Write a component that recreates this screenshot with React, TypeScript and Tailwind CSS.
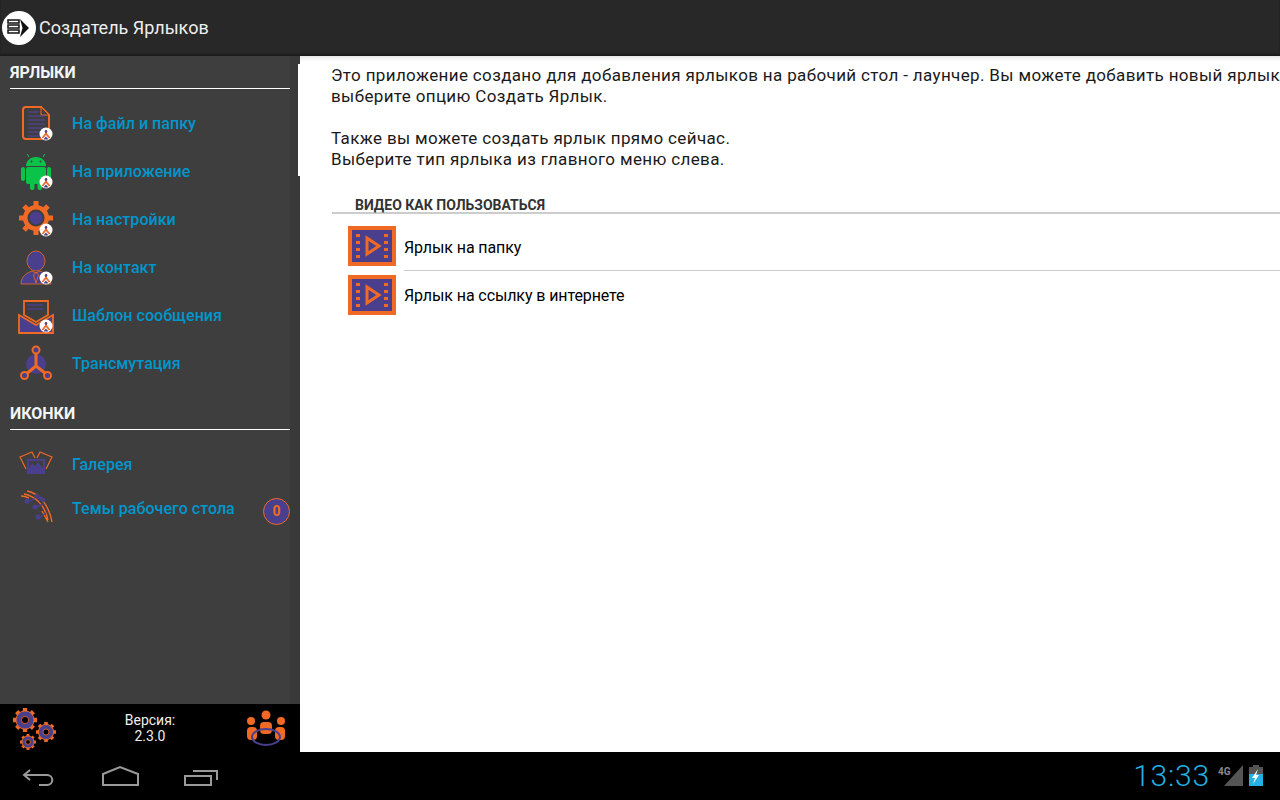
import type { ReactNode } from "react";

const orange = "#f06a26";
const purple = "#4a3f8c";

const Badge = () => (
  <g>
    <circle cx="30" cy="31" r="6.500" fill="#fff" />
    <path d="M30 27v3.500M30 30.500l-3.500 4.500M30 30.500l3.500 4.500" stroke={orange} strokeWidth="1.800" fill="none" />
    <circle cx="30" cy="28.500" r="1.300" fill={purple} />
    <path d="M27.500 36.500l2.500-3 2.500 3z" fill={purple} />
  </g>
);

const FileIcon = () => (
  <svg width="40" height="40" viewBox="0 0 40 40">
    <path d="M10 4h15l8 8v21a3 3 0 0 1-3 3H10a3 3 0 0 1-3-3V7a3 3 0 0 1 3-3z" fill="#3d3e3d" stroke={orange} strokeWidth="2" />
    <path d="M25 4v8h8z" fill="#3d3e3d" stroke={orange} strokeWidth="1" />
    <path d="M12 9h11M12 13h17M12 17h17M12 21h17M12 25h15M12 29h13M12 33h13" stroke="#5547a8" strokeWidth="1.100" />
    <Badge />
  </svg>
);

const AndroidIcon = () => (
  <svg width="40" height="40" viewBox="0 0 40 40">
    <path d="M11 3l2 3M29 3l-2 3" stroke="#0ac44a" strokeWidth="1" />
    <path d="M10 15c0-5 4-9 10-9s10 4 10 9z" fill="#0ac44a" />
    <circle cx="15.500" cy="10.500" r="1" fill="#3d3e3d" />
    <circle cx="24.500" cy="10.500" r="1" fill="#3d3e3d" />
    <rect x="10" y="16" width="20" height="17" rx="2" fill="#0ac44a" />
    <rect x="5" y="16" width="4" height="14" rx="2" fill="#0ac44a" />
    <rect x="31" y="16" width="4" height="14" rx="2" fill="#0ac44a" />
    <rect x="14" y="31" width="4.500" height="8" rx="2" fill="#0ac44a" />
    <rect x="21.500" y="31" width="4.500" height="8" rx="2" fill="#0ac44a" />
    <Badge />
  </svg>
);

const GearIcon = () => (
  <svg width="40" height="40" viewBox="0 0 40 40">
    <g stroke={orange} strokeWidth="5">
      <path d="M20 2v34M3 19h34M8 7l24 24M32 7L8 31" />
    </g>
    <circle cx="20" cy="19" r="13" fill={orange} />
    <circle cx="20" cy="19" r="8.500" fill="#3d3e3d" />
    <circle cx="20" cy="19" r="6.500" fill={purple} />
    <Badge />
  </svg>
);

const ContactIcon = () => (
  <svg width="40" height="40" viewBox="0 0 40 40">
    <ellipse cx="20" cy="14" rx="9" ry="10" fill={purple} stroke={orange} strokeWidth="0.800" />
    <path d="M5 37c0-8 6-11 11-13l4 2 4-2c5 2 11 5 11 13z" fill={purple} stroke={orange} strokeWidth="0.800" />
    <path d="M20 25l-2.500 3 2.500 8 2.500-8z" fill="none" stroke={orange} strokeWidth="0.800" />
    <Badge />
  </svg>
);

const MailIcon = () => (
  <svg width="40" height="40" viewBox="0 0 40 40">
    <path d="M3 20v18h34V20L20 30z" fill={purple} stroke={orange} strokeWidth="1.800" />
    <path d="M8 20V6h24v14L20 27z" fill="#3d3e3d" stroke={orange} strokeWidth="1.800" />
    <path d="M11 10h16M11 14h16" stroke={purple} strokeWidth="1.600" />
    <Badge />
  </svg>
);

const TransmuteIcon = () => (
  <svg width="40" height="40" viewBox="0 0 40 40">
    <circle cx="20" cy="21" r="10" fill={purple} />
    <path d="M20 7v16L9 32M20 23l11.500 9" stroke={orange} strokeWidth="3" fill="none" />
    <circle cx="20" cy="7" r="3.500" fill={purple} stroke={orange} strokeWidth="2" />
    <circle cx="8.500" cy="32.500" r="3.500" fill={purple} stroke={orange} strokeWidth="2" />
    <circle cx="31.500" cy="32.500" r="3.500" fill={purple} stroke={orange} strokeWidth="2" />
  </svg>
);

const GalleryIcon = () => (
  <svg width="40" height="40" viewBox="0 0 40 40">
    <path d="M10 26L4 14l12-5 3 6M30 26l6-12-12-5-3 6" fill="none" stroke={orange} strokeWidth="1.200" />
    <rect x="11" y="16" width="18" height="15" fill={purple} />
    <path d="M13 25l3-5 3 3 3-4 5 6v-7H13z" fill="#3d3e3d" />
  </svg>
);

const ThemesIcon = () => (
  <svg width="40" height="40" viewBox="0 0 40 40">
    <path d="M11 4c12 2 22 14 25 31M8 7c11 2 21 11 24 26M5 9c3 0 6 1 8 2M26 24l6 11" stroke={orange} strokeWidth="1.400" fill="none" />
    <path d="M19 8l10 6" stroke={purple} strokeWidth="3.500" />
    <circle cx="11" cy="14" r="2.600" fill={purple} />
    <circle cx="19" cy="20" r="2.600" fill={purple} />
    <circle cx="22" cy="30" r="2.600" fill={purple} />
    <path d="M13 14l6-2M21 20l6-3M24 30l6-4" stroke={purple} strokeWidth="1.500" />
  </svg>
);

const Cog = ({ x, y, r }: { x: number; y: number; r: number }) => (
  <g transform={`translate(${x} ${y})`}>
    <g stroke={orange} strokeWidth={r * 0.36}>
      <path d={`M0 ${-r}V${r}M${-r} 0H${r}M${-r * 0.7} ${-r * 0.7}L${r * 0.7} ${r * 0.7}M${r * 0.7} ${-r * 0.7}L${-r * 0.7} ${r * 0.7}`} />
    </g>
    <circle r={r * 0.76} fill={purple} stroke={orange} strokeWidth="1" />
    <circle r={r * 0.3} fill="#000" stroke={orange} strokeWidth="0.800" />
  </g>
);

const ItemLabel = ({ children }: { children: ReactNode }) => (
  <span className="pt-[2px] text-[16px] font-medium leading-none tracking-[0.05px] text-[#0096cc]">{children}</span>
);

const SidebarItem = ({ icon, label }: { icon: ReactNode; label: string }) => (
  <div className="flex h-12 items-center gap-4 pl-4">
    {icon}
    <ItemLabel>{label}</ItemLabel>
  </div>
);

const SectionTitle = ({ title }: { title: string }) => (
  <div className="ml-[10px] border-b border-white pb-[6px] pt-[1px]">
    <p className="text-[16px] font-bold leading-[18px] text-[#f4f4f4]">{title}</p>
  </div>
);

const VideoIcon = () => (
  <svg width="48" height="40" viewBox="0 0 48 40" className="shrink-0">
    <rect width="48" height="40" fill={orange} />
    <rect x="4" y="4" width="40" height="32" fill={purple} />
    <path d="M8 8h4v3H8zM8 15h4v3H8zM8 22h4v3H8zM8 29h4v3H8zM36 8h4v3h-4zM36 15h4v3h-4zM36 22h4v3h-4zM36 29h4v3h-4z" fill={orange} />
    <path d="M19 12l12 8-12 8z" fill="none" stroke={orange} strokeWidth="3" />
  </svg>
);

const App = () => {
  return (
    <div className="relative flex h-[800px] w-[1280px] flex-col overflow-hidden bg-black font-['Roboto',sans-serif]">
      <header className="flex h-14 shrink-0 items-center gap-[3px] bg-[#282828] pl-[2px] shadow-[inset_0_-2px_2px_rgba(0,0,0,0.3)]">
        <svg width="34" height="34" viewBox="0 0 34 34">
          <circle cx="17" cy="17" r="17" fill="#fff" />
          <path d="M6 9h11v3H6zM6 14h11v3H6zM6 19h11v3H6z" fill="#fff" stroke="#111" strokeWidth="1.500" />
          <path d="M18 8l9 9-9 9 2.500-9z" fill="#111" />
        </svg>
        <span className="text-[18px] leading-none text-[#eeeeee]">Создатель Ярлыков</span>
      </header>

      <div className="flex h-[696px] shrink-0">
        <aside className="flex w-[300px] shrink-0 flex-col">
          <div className="flex-1 border-r-[10px] border-[#383938] bg-[#3d3e3d] pt-[7px]">
            <SectionTitle title="ЯРЛЫКИ" />
            <div className="pt-[10px]">
              <SidebarItem icon={<FileIcon />} label="На файл и папку" />
              <SidebarItem icon={<AndroidIcon />} label="На приложение" />
              <SidebarItem icon={<GearIcon />} label="На настройки" />
              <SidebarItem icon={<ContactIcon />} label="На контакт" />
              <SidebarItem icon={<MailIcon />} label="Шаблон сообщения" />
              <SidebarItem icon={<TransmuteIcon />} label="Трансмутация" />
            </div>
            <div className="pt-[17px]">
              <SectionTitle title="ИКОНКИ" />
            </div>
            <div className="pt-[11px]">
              <div className="flex h-11 items-center gap-4 pl-4">
                <GalleryIcon />
                <span className="pt-[4px]">
                  <ItemLabel>Галерея</ItemLabel>
                </span>
              </div>
              <div className="flex h-11 items-center gap-4 pl-4">
                <ThemesIcon />
                <span className="pt-[4px]">
                  <ItemLabel>Темы рабочего стола</ItemLabel>
                </span>
                <span className="ml-auto mt-[8px] flex h-[27px] w-[27px] items-center justify-center rounded-full border border-[#f06a26] bg-[#4a3f8c] text-[14px] font-bold text-[#f06a26]">
                  0
                </span>
              </div>
            </div>
          </div>
          <div className="flex h-12 shrink-0 items-center justify-between bg-black px-[10px]">
            <svg width="48" height="48" viewBox="0 0 48 48">
              <Cog x={15} y={16} r={12} />
              <Cog x={36} y={28} r={10} />
              <Cog x={18} y={38} r={8} />
            </svg>
            <div className="text-center text-[14px] leading-[16px] text-[#eeeeee]">
              <p>Версия:</p>
              <p>2.3.0</p>
            </div>
            <svg width="48" height="48" viewBox="0 0 48 48">
              <circle cx="24" cy="11" r="4.500" fill={orange} />
              <circle cx="9" cy="17" r="4" fill={orange} />
              <circle cx="39" cy="17" r="4" fill={orange} />
              <rect x="5" y="23" width="10" height="13" rx="4" fill={orange} />
              <rect x="33" y="23" width="10" height="13" rx="4" fill={orange} />
              <rect x="18" y="18" width="12" height="12" rx="4" fill={orange} />
              <ellipse cx="24" cy="33" rx="14" ry="8" fill="none" stroke={purple} strokeWidth="2" />
            </svg>
          </div>
        </aside>

        <main className="relative min-w-0 flex-1 overflow-hidden bg-white shadow-[inset_0_6px_6px_-6px_rgba(0,0,0,0.2)]">
          <div className="pl-[31px] pt-[9px] text-[17px] leading-[21px] tracking-[0.36px] whitespace-nowrap text-[#1a1a1a]">
            <p>Это приложение создано для добавления ярлыков на рабочий стол - лаунчер. Вы можете добавить новый ярлык</p>
            <p>выберите опцию Создать Ярлык.</p>
            <p className="mt-[21px]">Также вы можете создать ярлык прямо сейчас.</p>
            <p>Выберите тип ярлыка из главного меню слева.</p>
          </div>
          <div className="ml-[32px] mt-[28px] border-b-2 border-[#cccccc] pl-[23px]">
            <p className="text-[14px] font-bold leading-[14px] text-[#333333]">ВИДЕО КАК ПОЛЬЗОВАТЬСЯ</p>
          </div>
          <div className="ml-[48px] pt-[12px]">
            <div className="flex h-[45px] items-start gap-2">
              <VideoIcon />
              <div className="h-[45px] flex-1 border-b border-[#cccccc] pt-[11px]">
                <span className="block text-[16px] leading-[22px] tracking-[-0.1px] text-black">Ярлык на папку</span>
              </div>
            </div>
            <div className="flex h-[45px] items-start gap-2 pt-[4px]">
              <VideoIcon />
              <div className="flex h-[40px] flex-1 items-center pt-[2px]">
                <span className="text-[16px] tracking-[-0.1px] text-black">Ярлык на ссылку в интернете</span>
              </div>
            </div>
          </div>
        </main>
      </div>

      <div className="flex h-12 shrink-0 items-center">
        <svg width="240" height="48" viewBox="0 0 240 48" fill="none" stroke="#9a9a9a" strokeWidth="2">
          <path d="M30 18l-6 5 6 5M24 23h23c7 0 7 10 0 10h-8" />
          <path d="M103 33V22l17-7 18 7v11z" />
          <path d="M185 24h26v9h-26zM193 19h24v9" />
        </svg>
        <div className="ml-auto flex items-center gap-[6px]">
          <span className="text-[30px] font-light leading-none tracking-[0.8px] text-[#23b0e2]">13:33</span>
          <svg width="64" height="30" viewBox="0 0 64 30">
            <path d="M8 25L27 4v21z" fill="#555" />
            <text x="2" y="14" fontSize="10" fontWeight="700" fill="#8a8a8a" fontFamily="Roboto, sans-serif">4G</text>
            <rect x="33" y="6" width="14" height="19" fill="#555" />
            <rect x="37" y="4" width="6" height="3" fill="#555" />
            <rect x="33" y="13" width="14" height="12" fill="#23b0e2" />
            <path d="M42 8l-6 9h3l-2 6 6-9h-3z" fill="#fff" />
          </svg>
        </div>
      </div>

      <div className="absolute left-[298px] top-[64px] h-[112px] w-[2px] bg-white" />
    </div>
  );
};

export default App;
